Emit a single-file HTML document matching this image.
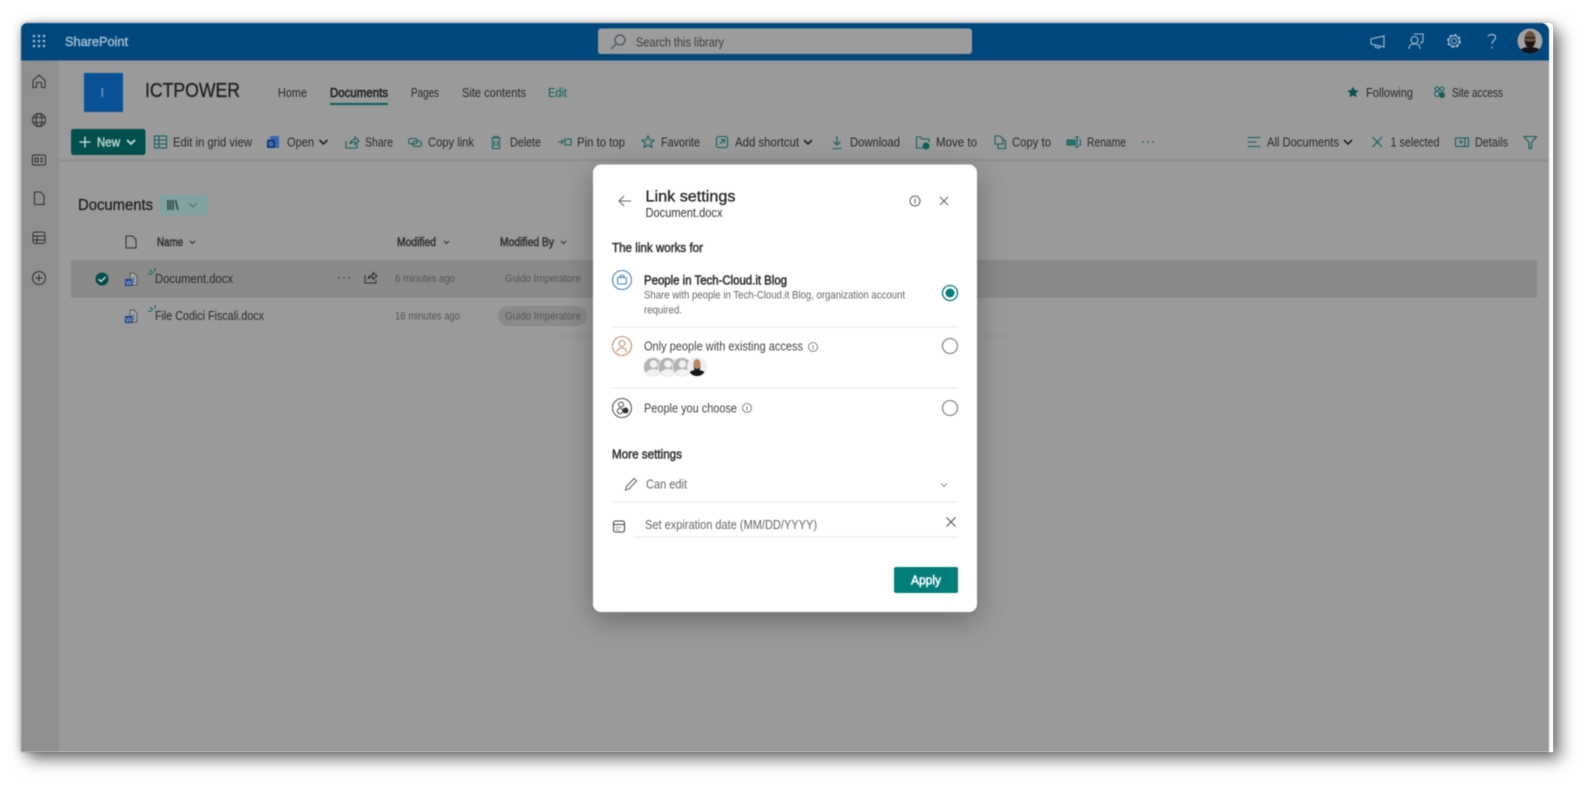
<!DOCTYPE html>
<html lang="en"><head><meta charset="utf-8"><title>Link settings</title>
<style>
html,body{margin:0;padding:0;background:#fff;width:1595px;height:793px;overflow:hidden}
svg{position:absolute;left:0;top:0;display:block}
#frame{position:absolute;left:21px;top:23px;width:1532px;height:729px;border-radius:6px 4px 0 0;box-shadow:7px 7px 16px rgba(0,0,0,.55),-1px 0 9px rgba(0,0,0,.18),0 -1px 5px rgba(0,0,0,.08)}
text{font-family:"Liberation Sans",sans-serif;font-size:12.5px;fill:#2a2a2a}
.sb{stroke-width:.3px;stroke:currentColor}
.sc{stroke-width:.5px;stroke:currentColor}
.s{font-size:11px}
.g{fill:#555;font-size:11px}
.i{fill:none;stroke:#14605f;stroke-width:1.1}
.k{fill:none;stroke:#222;stroke-width:1.1}
.r{fill:none;stroke:#2d2d2d;stroke-width:1}
.h{fill:none;stroke:#a2bacd;stroke-width:1.1}
.d{fill:none;stroke:#666;stroke-width:1.1}
</style></head><body>
<div id="frame"></div>
<svg width="1595" height="793" viewBox="0 0 1595 793" xmlns="http://www.w3.org/2000/svg">
<defs>
<filter id="soft" x="0" y="0" width="1595" height="793" filterUnits="userSpaceOnUse" color-interpolation-filters="sRGB"><feGaussianBlur stdDeviation=".42"/></filter>
<filter id="ms" x="-20%" y="-20%" width="140%" height="140%" color-interpolation-filters="sRGB"><feDropShadow dx="0" dy="8" stdDeviation="14" flood-color="#000" flood-opacity=".3"/></filter>
<clipPath id="a1"><circle cx="1530" cy="41" r="12.5"/></clipPath>
<clipPath id="p1"><circle cx="653" cy="367" r="9"/></clipPath>
<clipPath id="p2"><circle cx="667.500" cy="367" r="9"/></clipPath>
<clipPath id="p3"><circle cx="682" cy="367" r="9"/></clipPath>
<clipPath id="a2"><circle cx="697" cy="367" r="9"/></clipPath>
</defs>
<g filter="url(#soft)">
<rect x="21" y="60" width="1528" height="692" fill="#9a9a9a"/>
<rect x="21" y="60" width="38" height="692" fill="#8f8f8f"/>
<path d="M27 23H1541a8 8 0 0 1 8 8v29.500H21V29a6 6 0 0 1 6-6z" fill="#00477e"/>
<rect x="1549" y="31" width="4" height="721" fill="#fafafa"/>
<!-- top bar -->
<g fill="#a2bacd"><circle cx="34" cy="36" r="1.300"/><circle cx="39" cy="36" r="1.300"/><circle cx="44" cy="36" r="1.300"/><circle cx="34" cy="41" r="1.300"/><circle cx="39" cy="41" r="1.300"/><circle cx="44" cy="41" r="1.300"/><circle cx="34" cy="46" r="1.300"/><circle cx="39" cy="46" r="1.300"/><circle cx="44" cy="46" r="1.300"/></g>
<text x="65" y="46" textLength="63" lengthAdjust="spacingAndGlyphs" class="sc" style="fill:#9db7cc;color:#9db7cc;font-size:13px">SharePoint</text>
<rect x="598" y="28.500" width="374" height="25.500" rx="3" fill="#9c9c9c"/>
<path class="r" d="M611 49l5-5" style="stroke:#345"/><circle cx="620" cy="40" r="5" class="r" style="stroke:#345"/>
<text x="636" y="46.500" textLength="88" lengthAdjust="spacingAndGlyphs" style="fill:#3f3f3f">Search this library</text>
<path class="h" d="M1384 36v11l-13-3v-5zM1375 45l.500 2.500 4 .500.500-2"/>
<circle cx="1414.500" cy="40" r="3.500" class="h"/><path class="h" d="M1409 49c0-4 2-5 5.500-5s5.500 1 5.500 5M1414 34h9v8h-2v2"/>
<circle cx="1454" cy="41" r="2.500" class="h"/><circle cx="1454" cy="41" r="5.300" class="h"/><circle cx="1454" cy="41" r="6.300" fill="none" stroke="#a2bacd" stroke-width="1.400" stroke-dasharray="2.500 2.450"/>
<path class="h" style="stroke-width:1.200" d="M1488 36.500c.500-2.500 7-3 7.500 .500.500 3-3.500 3.500-3.500 7M1492 46.500v2"/>
<circle cx="1530" cy="41" r="12.500" fill="#a3a3a3"/>
<g clip-path="url(#a1)"><path d="M1517 56c1-7 6-9 13-9s12 2 13 9z" fill="#121212"/><ellipse cx="1530" cy="38.500" rx="5.500" ry="7.500" fill="#6d5040"/><path d="M1524.500 39c0 5 2 9 5.500 9s5.500-4 5.500-9l-1.500 2.500h-8z" fill="#1d1512"/><rect x="1525" y="37" width="10" height="1.400" fill="#222"/></g>
<!-- site header -->
<rect x="84" y="73" width="39" height="39" fill="#0a5296"/>
<text x="100.500" y="97" style="fill:#86a7c8;font-size:13px">I</text>
<text x="145" y="97" textLength="95" lengthAdjust="spacingAndGlyphs" class="sb" style="font-size:20.500px;fill:#1f1f1f;color:#1f1f1f">ICTPOWER</text>
<text x="278" y="97" textLength="29" lengthAdjust="spacingAndGlyphs">Home</text>
<text x="330" y="97" textLength="58" lengthAdjust="spacingAndGlyphs" class="sc" style="fill:#1f1f1f;color:#1f1f1f">Documents</text>
<rect x="330" y="103" width="58" height="2" fill="#06605e"/>
<text x="411" y="97" textLength="28" lengthAdjust="spacingAndGlyphs">Pages</text>
<text x="462" y="97" textLength="64" lengthAdjust="spacingAndGlyphs">Site contents</text>
<text x="548" y="97" textLength="19" lengthAdjust="spacingAndGlyphs" style="fill:#0f5f5e">Edit</text>
<path d="M1353 86.500l1.700 3.600 4 .500-3 2.700.800 4-3.500-2-3.500 2 .800-4-3-2.700 4-.500z" fill="#0b4f4e"/>
<text x="1366" y="97" textLength="47" lengthAdjust="spacingAndGlyphs">Following</text>
<circle cx="1437" cy="89" r="2" class="i"/><circle cx="1442" cy="89" r="2" class="i"/><circle cx="1437" cy="94" r="2.500" class="i"/><circle cx="1442" cy="95" r="3" fill="#0f5f5e"/>
<text x="1452" y="97" textLength="51" lengthAdjust="spacingAndGlyphs">Site access</text>
<!-- left rail -->
<path class="r" d="M33 80.500l6-5.500 6 5.500v7h-3.500v-5h-5v5H33z"/>
<circle cx="39" cy="120" r="6.500" class="r"/><ellipse cx="39" cy="120" rx="3" ry="6.500" class="r"/><path class="r" d="M33 117.500h12M33 122.500h12"/>
<rect x="32.500" y="155" width="13" height="10" rx="1.500" class="r"/><path class="r" d="M35 158h3v4h-3zM40 158h3M40 160h3M40 162h3"/>
<path class="r" d="M34.500 192h6l3.500 3.500v9h-9.500z"/>
<rect x="33" y="232" width="12" height="11.500" rx="2" class="r"/><path class="r" d="M33 236h12M33 240h12M37 236v7.500"/>
<circle cx="39" cy="278" r="6.500" class="r"/><path class="r" d="M39 274.500v7M35.500 278h7"/>
<!-- command bar -->
<rect x="59" y="159" width="1490" height="2.500" fill="#8f8f8f"/>
<rect x="71" y="129" width="74.500" height="26" rx="2.500" fill="#00504e"/>
<path d="M85 136.500v11M79.500 142h11" fill="none" stroke="#b8cfcd" stroke-width="1.500"/>
<text x="97" y="146.500" textLength="23" lengthAdjust="spacingAndGlyphs" class="sc" style="fill:#b8cfcd;color:#b8cfcd">New</text>
<path d="M127 140l4 4 4-4" fill="none" stroke="#b8cfcd" stroke-width="2"/>
<rect x="154.500" y="136" width="12" height="12" class="i"/><path class="i" d="M154.500 140h12M154.500 144h12M159 136v12"/>
<text x="173" y="146.500" textLength="79" lengthAdjust="spacingAndGlyphs">Edit in grid view</text>
<rect x="270" y="136" width="9" height="12" rx="1" fill="#3b68a8"/><rect x="267" y="139.500" width="8" height="8.500" rx="1" fill="#103d80"/><text x="269" y="146" style="fill:#bcc8dc;font-size:7px">o</text>
<text x="287" y="146.500" textLength="27" lengthAdjust="spacingAndGlyphs">Open</text>
<path class="k" style="stroke-width:1.600" d="M319.500 140l4 4 4-4"/>
<path class="i" d="M346 141v7h11v-4M350 144c.500-3 2.500-4.500 5-4.500v-2.500l4 4-4 3.500v-2.500c-2 0-4 .500-5 2z"/>
<text x="365" y="146.500" textLength="28" lengthAdjust="spacingAndGlyphs">Share</text>
<rect x="408.500" y="138.500" width="9" height="5.500" rx="2.700" class="i"/><rect x="412.500" y="141" width="9" height="5.500" rx="2.700" class="i"/>
<text x="428" y="146.500" textLength="46" lengthAdjust="spacingAndGlyphs">Copy link</text>
<path class="i" d="M491.500 138h9M494 138v-1.500h4v1.500M492.500 138v10.500h7V138M494.500 141v5M497.500 141v5"/>
<text x="510" y="146.500" textLength="31" lengthAdjust="spacingAndGlyphs">Delete</text>
<path class="i" d="M558 142h4M562 139.500v5M562 141h3M565 139h6v6h-6z"/>
<text x="577" y="146.500" textLength="48" lengthAdjust="spacingAndGlyphs">Pin to top</text>
<path class="i" d="M648 136l1.800 4 4.200.400-3.200 2.800 1 4.300-3.800-2.300-3.800 2.300 1-4.300-3.200-2.800 4.200-.400z"/>
<text x="661" y="146.500" textLength="39" lengthAdjust="spacingAndGlyphs">Favorite</text>
<rect x="716.500" y="136.500" width="11" height="11" rx="2" class="i"/><path class="i" d="M720 144l4.500-4.500M721 139.500h3.500v3.500"/>
<text x="735" y="146.500" textLength="64" lengthAdjust="spacingAndGlyphs">Add shortcut</text>
<path class="k" style="stroke-width:1.600" d="M804 140l4 4 4-4"/>
<path class="i" d="M837 136v9M833.500 141.500l3.500 3.500 3.500-3.500M832.500 148.500h9"/>
<text x="850" y="146.500" textLength="50" lengthAdjust="spacingAndGlyphs">Download</text>
<path class="i" d="M923 148h-6.500v-11h4l1.500 2h7v3"/><circle cx="926" cy="146" r="3.500" fill="#0f5f5e"/>
<text x="936" y="146.500" textLength="41" lengthAdjust="spacingAndGlyphs">Move to</text>
<path class="i" d="M995 136h5l3 3v5h-8zM998 144v4.500h7.500V141l-2.500-2"/>
<text x="1012" y="146.500" textLength="39" lengthAdjust="spacingAndGlyphs">Copy to</text>
<rect x="1067" y="140" width="8" height="5" fill="#2a7270" stroke="#14605f"/><path class="i" d="M1077 137v10M1075 137h4M1075 147h4M1079 140h1.500v5H1079"/>
<text x="1087" y="146.500" textLength="39" lengthAdjust="spacingAndGlyphs">Rename</text>
<g fill="#14605f"><circle cx="1143" cy="142" r=".900"/><circle cx="1148" cy="142" r=".900"/><circle cx="1153" cy="142" r=".900"/></g>
<path class="i" d="M1247.500 137.500h13M1247.500 142h9M1247.500 146.500h13"/>
<text x="1267" y="146.500" textLength="72" lengthAdjust="spacingAndGlyphs">All Documents</text>
<path class="k" style="stroke-width:1.600" d="M1344 140l4 4 4-4"/>
<path class="i" d="M1372.500 137l9.500 10M1382 137l-9.500 10"/>
<text x="1390.500" y="146.500" textLength="49" lengthAdjust="spacingAndGlyphs">1 selected</text>
<rect x="1455.500" y="138" width="13" height="8.500" class="i"/><path class="i" d="M1465 138v8.500M1459 142h4M1461 140v4"/>
<text x="1475" y="146.500" textLength="33" lengthAdjust="spacingAndGlyphs">Details</text>
<path class="i" d="M1524 136.500h12.500l-5 6v6h-2.500v-6z"/>
<!-- list -->
<text x="78" y="210" textLength="75" lengthAdjust="spacingAndGlyphs" class="sb" style="font-size:15.500px;fill:#222;color:#222">Documents</text>
<rect x="159" y="194.500" width="48.500" height="21" rx="1" fill="#82a2a2"/>
<path d="M168 200v10M170.500 200v10M173 200v10M175.500 200l2.500 10" fill="none" stroke="#2d4a4a" stroke-width="1.600"/>
<path d="M189 203l4 4 4-4" fill="none" stroke="#4a6f6f" stroke-width="1"/>
<path class="r" d="M126 236h6.500l3.500 3.500v8.500h-10z"/>
<text x="157" y="246" textLength="26" lengthAdjust="spacingAndGlyphs" class="sc" style="font-size:11.500px;fill:#333;color:#333">Name</text>
<path class="r" d="M190 241l2.500 2.500 2.500-2.500"/>
<text x="397" y="246" textLength="39" lengthAdjust="spacingAndGlyphs" class="sc" style="font-size:11.500px;fill:#333;color:#333">Modified</text>
<path class="r" d="M444 241l2.500 2.500 2.500-2.500"/>
<text x="500" y="246" textLength="54" lengthAdjust="spacingAndGlyphs" class="sc" style="font-size:11.500px;fill:#333;color:#333">Modified By</text>
<path class="r" d="M561 241l2.500 2.500 2.500-2.500"/>
<rect x="71" y="260" width="1466" height="38" fill="#8a8a89"/>
<rect x="71" y="335.500" width="1466" height="1" fill="#909090"/>
<circle cx="102" cy="279" r="6.500" fill="#004d4b"/><path d="M98.500 279l2.500 2.500 4.500-4.500" fill="none" stroke="#c5d5d4" stroke-width="1.500"/>
<path d="M130 273h4l3 3v9h-7z" fill="#a5a5a5" stroke="#555" stroke-width=".9"/><path d="M132 278h3M132 280h3M132 282h3" stroke="#4a6a9a"/><rect x="125" y="279" width="7.500" height="7" fill="#123f88"/><text x="125.700" y="285" style="fill:#cdd6e6;font-size:6.500px">W</text>
<path d="M150 270l3 3M155 268v3.500M148 274h4" stroke="#0f5f5e" fill="none"/>
<text x="155" y="283" textLength="78" lengthAdjust="spacingAndGlyphs">Document.docx</text>
<g fill="#444"><circle cx="339" cy="278" r=".900"/><circle cx="344" cy="278" r=".900"/><circle cx="349" cy="278" r=".900"/></g>
<path class="r" d="M365 275v8h11v-3M368 279c.500-3 2.500-4 5-4v-2.500l4 3.500-4 3.500v-2.500c-2 0-4 .500-5 2z"/>
<text x="395" y="282" class="g" textLength="60" lengthAdjust="spacingAndGlyphs">6 minutes ago</text>
<text x="505" y="282" class="g" textLength="76" lengthAdjust="spacingAndGlyphs">Guido Imperatore</text>
<rect x="498" y="306" width="89" height="20" rx="10" fill="#8a8a8a"/>
<g transform="translate(0,37)"><path d="M130 273h4l3 3v9h-7z" fill="#a5a5a5" stroke="#555" stroke-width=".9"/><path d="M132 278h3M132 280h3M132 282h3" stroke="#4a6a9a"/><rect x="125" y="279" width="7.500" height="7" fill="#123f88"/><text x="125.700" y="285" style="fill:#cdd6e6;font-size:6.500px">W</text>
<path d="M150 270l3 3M155 268v3.500M148 274h4" stroke="#0f5f5e" fill="none"/></g>
<text x="155" y="320" textLength="109" lengthAdjust="spacingAndGlyphs">File Codici Fiscali.docx</text>
<text x="395" y="319.500" class="g" textLength="65" lengthAdjust="spacingAndGlyphs">16 minutes ago</text>
<text x="505" y="319.500" class="g" textLength="76" lengthAdjust="spacingAndGlyphs">Guido Imperatore</text>
<!-- modal -->
<rect x="593" y="164.500" width="384" height="447.500" rx="8" fill="#fff" filter="url(#ms)"/>
<path class="d" d="M619 201h12M624 196l-5 5 5 5"/>
<text x="645.500" y="201.500" textLength="90" lengthAdjust="spacingAndGlyphs" class="sb" style="font-size:16px;fill:#242424;color:#242424">Link settings</text>
<text x="645.500" y="217" textLength="77" lengthAdjust="spacingAndGlyphs" style="fill:#333">Document.docx</text>
<circle cx="915" cy="201" r="5" class="d"/><path class="d" d="M915 198.500v5"/>
<path class="d" d="M940 197l8 8M948 197l-8 8"/>
<text x="612" y="252" textLength="91" lengthAdjust="spacingAndGlyphs" class="sc" style="fill:#333;color:#333">The link works for</text>
<circle cx="622" cy="280" r="9.500" fill="none" stroke="#3f7fb8" stroke-width="1.100"/>
<rect x="617.500" y="277.500" width="9" height="6.500" rx="1.500" fill="none" stroke="#3f7fb8"/><path d="M620 277.500v-2h4v2" fill="none" stroke="#3f7fb8"/>
<text x="644" y="284.500" textLength="143" lengthAdjust="spacingAndGlyphs" class="sc" style="fill:#2a2a2a;color:#2a2a2a">People in Tech-Cloud.it Blog</text>
<text x="644" y="298.500" class="s" textLength="261" lengthAdjust="spacingAndGlyphs" style="fill:#666">Share with people in Tech-Cloud.it Blog, organization account</text>
<text x="644" y="313.500" class="s" textLength="38" lengthAdjust="spacingAndGlyphs" style="fill:#666">required.</text>
<circle cx="950" cy="293" r="7.500" fill="none" stroke="#037c7c" stroke-width="1.300"/><circle cx="950" cy="293" r="4.500" fill="#037c7c"/>
<rect x="612" y="326.500" width="346" height="1" fill="#e8e8e8"/>
<circle cx="622" cy="346" r="9.500" fill="none" stroke="#c08a68" stroke-width="1.100"/>
<circle cx="622" cy="343.500" r="3" fill="none" stroke="#c08a68"/><path d="M616.500 352c1-3 3-4 5.500-4 1.500 0 3 .500 4 1.500l1 2.500" fill="none" stroke="#c08a68"/>
<text x="644" y="350.500" textLength="159" lengthAdjust="spacingAndGlyphs" style="fill:#444">Only people with existing access</text>
<circle cx="813" cy="347" r="4.500" class="d" style="stroke-width:.8"/><path class="d" style="stroke-width:.8" d="M813 345v4.500"/>
<circle cx="950" cy="346" r="7.500" fill="none" stroke="#8a8a8a" stroke-width="1.300"/>
<circle cx="653" cy="367" r="10" fill="#eee"/><circle cx="653" cy="367" r="9" fill="#b3b3b3"/>
<g clip-path="url(#p1)"><circle cx="653.500" cy="364" r="3.800" fill="#f2f2f2"/><ellipse cx="653.500" cy="375" rx="8" ry="6" fill="#f2f2f2"/></g>
<circle cx="667.500" cy="367" r="10" fill="#eee"/><circle cx="667.500" cy="367" r="9" fill="#b3b3b3"/>
<g clip-path="url(#p2)"><circle cx="668" cy="364" r="3.800" fill="#f2f2f2"/><ellipse cx="668" cy="375" rx="8" ry="6" fill="#f2f2f2"/></g>
<circle cx="682" cy="367" r="10" fill="#eee"/><circle cx="682" cy="367" r="9" fill="#b3b3b3"/>
<g clip-path="url(#p3)"><circle cx="682.500" cy="364" r="3.800" fill="#f2f2f2"/><ellipse cx="682.500" cy="375" rx="8" ry="6" fill="#f2f2f2"/></g>
<circle cx="697" cy="367" r="10" fill="#f0f0f0"/>
<g clip-path="url(#a2)"><path d="M687 378c1-6 4-8 10-8s9 2 10 8z" fill="#161616"/><ellipse cx="697" cy="364.500" rx="3.700" ry="5.500" fill="#b98a62"/><path d="M693.300 365c.500 5 7 5 7.400 0l-1 5h-5.400z" fill="#222"/></g>
<rect x="612" y="387.500" width="346" height="1" fill="#e8e8e8"/>
<circle cx="622" cy="408" r="9.500" fill="none" stroke="#555" stroke-width="1.100"/>
<circle cx="621" cy="404.500" r="2.500" fill="none" stroke="#444"/><circle cx="620" cy="411" r="2.700" fill="none" stroke="#444"/><circle cx="625.500" cy="410.500" r="3" fill="#333"/>
<text x="644" y="412.500" textLength="93" lengthAdjust="spacingAndGlyphs" style="fill:#444">People you choose</text>
<circle cx="747" cy="408" r="4.500" class="d" style="stroke-width:.8"/><path class="d" style="stroke-width:.8" d="M747 406v4.500"/>
<circle cx="950" cy="408" r="7.500" fill="none" stroke="#8a8a8a" stroke-width="1.300"/>
<text x="612" y="458.500" textLength="70" lengthAdjust="spacingAndGlyphs" class="sc" style="fill:#333;color:#333">More settings</text>
<path class="d" d="M625.500 490l1-3.500 7.500-8 2.500 2.500-7.500 8z"/>
<text x="646" y="488.500" textLength="41" lengthAdjust="spacingAndGlyphs" style="fill:#666">Can edit</text>
<path d="M941 483.500l3 3 3-3" fill="none" stroke="#888"/>
<rect x="612" y="501.500" width="346" height="1" fill="#e8e8e8"/>
<rect x="613.500" y="521" width="11" height="11" rx="2" fill="none" stroke="#444" stroke-width="1.100"/><path d="M613.500 524.500h11" stroke="#444"/><path d="M616 527.500h6M616 529.700h4" stroke="#444" stroke-dasharray="1 1"/>
<text x="645" y="529" textLength="172" lengthAdjust="spacingAndGlyphs" style="fill:#666">Set expiration date (MM/DD/YYYY)</text>
<path d="M946.500 517.500l9 9M955.500 517.500l-9 9" fill="none" stroke="#555" stroke-width="1.100"/>
<rect x="634" y="536.500" width="324" height="1" fill="#e8e8e8"/>
<rect x="894" y="567" width="64" height="26" rx="2" fill="#037c7c"/>
<text x="911" y="584.500" textLength="30" lengthAdjust="spacingAndGlyphs" class="sc" style="fill:#fff;color:#fff">Apply</text>
</g>
</svg>
</body></html>
